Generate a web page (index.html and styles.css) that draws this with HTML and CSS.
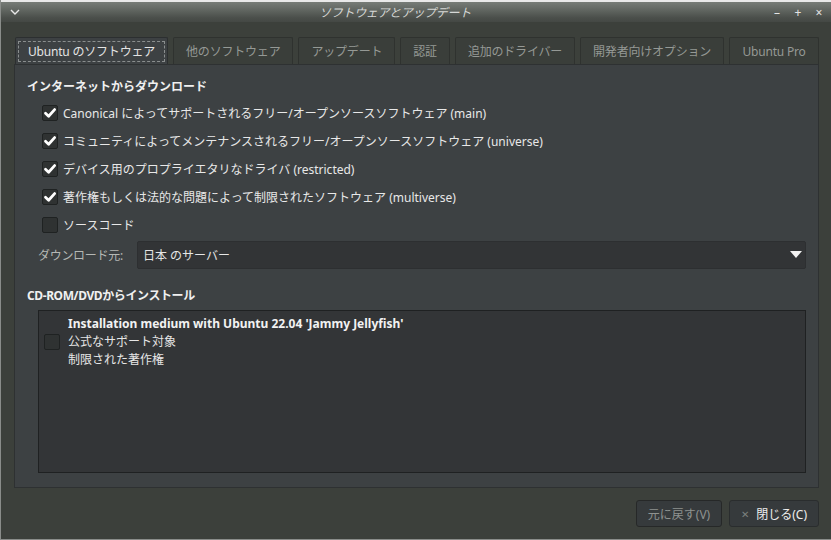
FILE: index.html
```html
<!DOCTYPE html>
<html lang="ja">
<head>
  <meta charset="UTF-8">
  <title>ソフトウェアとアップデート</title>
  <link rel="stylesheet" href="styles.css">
</head>
<body>
  <div class="window">
    <div class="titlebar">
      <div class="tb-left">
        <svg width="10" height="7" viewBox="0 0 10 7"><path d="M1 1 L5 5 L9 1" fill="none" stroke="#e8e8e8" stroke-width="1.4"/></svg>
      </div>
      <div class="tb-title">ソフトウェアとアップデート</div>
      <div class="tb-right">
        <span class="tb-btn">–</span>
        <span class="tb-btn">+</span>
        <span class="tb-btn">×</span>
      </div>
    </div>

    <div class="content">
      <ul class="tabs">
        <li class="active"><span>Ubuntu のソフトウェア</span></li>
        <li>他のソフトウェア</li>
        <li>アップデート</li>
        <li>認証</li>
        <li>追加のドライバー</li>
        <li>開発者向けオプション</li>
        <li>Ubuntu Pro</li>
      </ul>

      <div class="panel">
        <h2 class="heading">インターネットからダウンロード</h2>
        <div class="checks">
          <div class="check-row"><span class="cb checked"></span>Canonical によってサポートされるフリー/オープンソースソフトウェア (main)</div>
          <div class="check-row"><span class="cb checked"></span>コミュニティによってメンテナンスされるフリー/オープンソースソフトウェア (universe)</div>
          <div class="check-row"><span class="cb checked"></span>デバイス用のプロプライエタリなドライバ (restricted)</div>
          <div class="check-row"><span class="cb checked"></span>著作権もしくは法的な問題によって制限されたソフトウェア (multiverse)</div>
          <div class="check-row"><span class="cb"></span>ソースコード</div>
        </div>
        <div class="source-row">
          <span class="source-label">ダウンロード元:</span>
          <div class="combo">
            <span>日本 のサーバー</span>
            <svg width="12" height="8" viewBox="0 0 12 8"><path d="M0 0 H12 L6 7 Z" fill="#f2f2f2"/></svg>
          </div>
        </div>

        <h2 class="heading heading-cd">CD-ROM/DVDからインストール</h2>
        <div class="cd-list">
          <div class="cd-item">
            <span class="cb"></span>
            <div class="cd-text">
              <div class="cd-title">Installation medium with Ubuntu 22.04 'Jammy Jellyfish'</div>
              <div>公式なサポート対象</div>
              <div>制限された著作権</div>
            </div>
          </div>
        </div>
      </div>

      <div class="buttons">
        <div class="btn disabled">元に戻す(V)</div>
        <div class="btn"><span class="btn-x">✕</span>閉じる(C)</div>
      </div>
    </div>
  </div>
</body>
</html>
```

FILE: styles.css
```css
*{
  margin:0;
  padding:0;
  box-sizing: border-box;
}
li{
  list-style: none;
}
html,body{
  width: 831px;
  height: 540px;
  overflow: hidden;
}
body{
  background-color: #3c403b;
  font-family: "Noto Sans", "Noto Sans CJK JP", sans-serif;
  font-size: 12px;
  color: #e6e6e6;
}
.window{
  width: 831px;
  height: 540px;
  border-left: 1px solid #8a8d8a;
  border-bottom: 1px solid #8a8d8a;
  display: flex;
  flex-direction: column;
}
.titlebar{
  height: 22px;
  border-top: 2px solid #e9e9e9;
  background: linear-gradient(#777c77, #5e635e 45%, #4a4e4a 80%, #444844);
  display: flex;
  align-items: center;
  padding: 0 6px 0 8px;
}
.tb-left{
  width: 80px;
  display: flex;
  padding-left: 1px;
}
.tb-title{
  flex: 1;
  text-align: center;
  font-size: 12px;
  color: #d6d8d6;
  font-style: italic;
  letter-spacing: -0.3px;
  padding-right: 44px;
}
.tb-right{
  width: 80px;
  display: flex;
  justify-content: flex-end;
  gap: 9px;
}
.tb-btn{
  color: #e4e4e4;
  font-size: 12px;
  width: 12px;
  text-align: center;
}
.content{
  flex: 1;
  display: flex;
  flex-direction: column;
  padding: 15px 12px 0 13px;
}
.tabs{
  display: flex;
  gap: 5px;
  height: 27px;
  padding-left: 1px;
  overflow: hidden;
}
.tabs li{
  flex: none;
  white-space: nowrap;
  height: 27px;
  padding: 0 12px;
  display: flex;
  align-items: center;
  justify-content: center;
  border: 1px solid #2f322f;
  border-bottom: none;
  background-color: #3a3e3a;
  color: #959995;
  font-size: 12px;
  letter-spacing: -0.2px;
  border-radius: 2px 2px 0 0;
}
.tabs li:last-child{
  flex: 1;
}
.tabs li.active{
  padding: 0 2px;
  background-color: #3d4143;
  color: #e4e4e4;
  border-color: #2c2f30;
}
.tabs li.active span{
  border: 1px dashed #8a8e8e;
  padding: 2px 9px;
  height: 21px;
  display: flex;
  align-items: center;
}
.panel{
  height: 424px;
  background-color: #3d4143;
  border: 1px solid #2e3132;
  padding: 0 12px 0 12px;
  display: flex;
  flex-direction: column;
}
.heading{
  font-size: 12px;
  font-weight: bold;
  color: #f0f0f0;
  height: 20px;
  line-height: 20px;
  margin-top: 12px;
}
.checks{
  display: flex;
  flex-direction: column;
  padding-left: 15px;
  margin-top: 2px;
}
.check-row{
  height: 28px;
  display: flex;
  align-items: center;
  gap: 5px;
  font-size: 12px;
  color: #e8e8e8;
}
.cb{
  width: 16px;
  height: 16px;
  border: 1px solid #1f2222;
  border-radius: 2px;
  background-color: #2f3232;
  flex: none;
  display: inline-block;
}
.cb.checked{
  background: #2f3232 url("data:image/svg+xml;utf8,<svg xmlns='http://www.w3.org/2000/svg' width='14' height='14' viewBox='0 0 14 14'><path d='M2.5 7.2 L5.6 10.2 L11.6 3.6' fill='none' stroke='white' stroke-width='2.8' stroke-linecap='round' stroke-linejoin='round'/></svg>") center no-repeat;
}
.source-row{
  display: flex;
  align-items: center;
  height: 28px;
  margin-top: 2px;
  padding-left: 11px;
}
.source-label{
  width: 99px;
  color: #b5b8b5;
  font-size: 12px;
  letter-spacing: -0.3px;
}
.combo{
  flex: 1;
  height: 28px;
  background-color: #323436;
  border: 1px solid #2d2f31;
  border-radius: 2px;
  display: flex;
  align-items: center;
  justify-content: space-between;
  padding: 0 3px 0 5px;
  color: #e6e6e6;
}
.heading-cd{
  margin-top: 17px;
  letter-spacing: -0.4px;
}
.cd-list{
  margin: 4px 0 0 11px;
  height: 163px;
  background-color: #333537;
  border: 1px solid #1f2122;
}
.cd-item{
  display: flex;
  align-items: center;
  padding: 4px 0 0 5px;
  gap: 8px;
}
.cd-text{
  line-height: 18px;
  font-size: 12px;
  color: #e6e6e6;
}
.cd-title{
  font-weight: bold;
  color: #f2f2f2;
}
.buttons{
  display: flex;
  justify-content: flex-end;
  gap: 7px;
  margin-top: 12px;
}
.btn{
  height: 27px;
  padding: 0 11px;
  display: flex;
  align-items: center;
  background-color: #363a3c;
  border: 1px solid #2a2d2e;
  border-radius: 3px;
  color: #eeeeee;
  font-size: 12px;
}
.btn.disabled{
  color: #8e9290;
  border-color: #262828;
}
.btn-x{
  color: #7c807e;
  font-size: 10px;
  margin-right: 7px;
}
```
